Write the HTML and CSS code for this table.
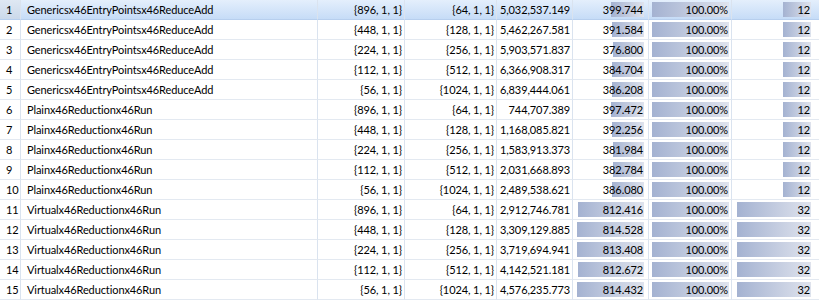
FILE: index.html
```html
<!DOCTYPE html>
<html>
<head>
<meta charset="utf-8">
<link rel="stylesheet" href="styles.css">
</head>
<body>
<div class="grid">
  <div class="row sel"><div class="c idx">1</div><div class="c name">Genericsx46EntryPointsx46ReduceAdd</div><div class="c r">{896, 1, 1}</div><div class="c r">{64, 1, 1}</div><div class="c r">5,032,537.149</div><div class="c b6"><span class="bar" style="width:33px">399.744</span></div><div class="c b7"><span class="bar" style="width:77px">100.00%</span></div><div class="c b8"><span class="bar" style="width:28px">12</span></div></div>
  <div class="row"><div class="c idx">2</div><div class="c name">Genericsx46EntryPointsx46ReduceAdd</div><div class="c r">{448, 1, 1}</div><div class="c r">{128, 1, 1}</div><div class="c r">5,462,267.581</div><div class="c b6"><span class="bar" style="width:32px">391.584</span></div><div class="c b7"><span class="bar" style="width:77px">100.00%</span></div><div class="c b8"><span class="bar" style="width:28px">12</span></div></div>
  <div class="row"><div class="c idx">3</div><div class="c name">Genericsx46EntryPointsx46ReduceAdd</div><div class="c r">{224, 1, 1}</div><div class="c r">{256, 1, 1}</div><div class="c r">5,903,571.837</div><div class="c b6"><span class="bar" style="width:31px">376.800</span></div><div class="c b7"><span class="bar" style="width:77px">100.00%</span></div><div class="c b8"><span class="bar" style="width:28px">12</span></div></div>
  <div class="row"><div class="c idx">4</div><div class="c name">Genericsx46EntryPointsx46ReduceAdd</div><div class="c r">{112, 1, 1}</div><div class="c r">{512, 1, 1}</div><div class="c r">6,366,908.317</div><div class="c b6"><span class="bar" style="width:32px">384.704</span></div><div class="c b7"><span class="bar" style="width:77px">100.00%</span></div><div class="c b8"><span class="bar" style="width:28px">12</span></div></div>
  <div class="row"><div class="c idx">5</div><div class="c name">Genericsx46EntryPointsx46ReduceAdd</div><div class="c r">{56, 1, 1}</div><div class="c r">{1024, 1, 1}</div><div class="c r">6,839,444.061</div><div class="c b6"><span class="bar" style="width:32px">386.208</span></div><div class="c b7"><span class="bar" style="width:77px">100.00%</span></div><div class="c b8"><span class="bar" style="width:28px">12</span></div></div>
  <div class="row"><div class="c idx">6</div><div class="c name">Plainx46Reductionx46Run</div><div class="c r">{896, 1, 1}</div><div class="c r">{64, 1, 1}</div><div class="c r">744,707.389</div><div class="c b6"><span class="bar" style="width:33px">397.472</span></div><div class="c b7"><span class="bar" style="width:77px">100.00%</span></div><div class="c b8"><span class="bar" style="width:28px">12</span></div></div>
  <div class="row"><div class="c idx">7</div><div class="c name">Plainx46Reductionx46Run</div><div class="c r">{448, 1, 1}</div><div class="c r">{128, 1, 1}</div><div class="c r">1,168,085.821</div><div class="c b6"><span class="bar" style="width:32px">392.256</span></div><div class="c b7"><span class="bar" style="width:77px">100.00%</span></div><div class="c b8"><span class="bar" style="width:28px">12</span></div></div>
  <div class="row"><div class="c idx">8</div><div class="c name">Plainx46Reductionx46Run</div><div class="c r">{224, 1, 1}</div><div class="c r">{256, 1, 1}</div><div class="c r">1,583,913.373</div><div class="c b6"><span class="bar" style="width:31px">381.984</span></div><div class="c b7"><span class="bar" style="width:77px">100.00%</span></div><div class="c b8"><span class="bar" style="width:28px">12</span></div></div>
  <div class="row"><div class="c idx">9</div><div class="c name">Plainx46Reductionx46Run</div><div class="c r">{112, 1, 1}</div><div class="c r">{512, 1, 1}</div><div class="c r">2,031,668.893</div><div class="c b6"><span class="bar" style="width:31px">382.784</span></div><div class="c b7"><span class="bar" style="width:77px">100.00%</span></div><div class="c b8"><span class="bar" style="width:28px">12</span></div></div>
  <div class="row"><div class="c idx">10</div><div class="c name">Plainx46Reductionx46Run</div><div class="c r">{56, 1, 1}</div><div class="c r">{1024, 1, 1}</div><div class="c r">2,489,538.621</div><div class="c b6"><span class="bar" style="width:32px">386.080</span></div><div class="c b7"><span class="bar" style="width:77px">100.00%</span></div><div class="c b8"><span class="bar" style="width:28px">12</span></div></div>
  <div class="row"><div class="c idx">11</div><div class="c name">Virtualx46Reductionx46Run</div><div class="c r">{896, 1, 1}</div><div class="c r">{64, 1, 1}</div><div class="c r">2,912,746.781</div><div class="c b6"><span class="bar" style="width:66px">812.416</span></div><div class="c b7"><span class="bar" style="width:77px">100.00%</span></div><div class="c b8"><span class="bar" style="width:74px">32</span></div></div>
  <div class="row"><div class="c idx">12</div><div class="c name">Virtualx46Reductionx46Run</div><div class="c r">{448, 1, 1}</div><div class="c r">{128, 1, 1}</div><div class="c r">3,309,129.885</div><div class="c b6"><span class="bar" style="width:67px">814.528</span></div><div class="c b7"><span class="bar" style="width:77px">100.00%</span></div><div class="c b8"><span class="bar" style="width:74px">32</span></div></div>
  <div class="row"><div class="c idx">13</div><div class="c name">Virtualx46Reductionx46Run</div><div class="c r">{224, 1, 1}</div><div class="c r">{256, 1, 1}</div><div class="c r">3,719,694.941</div><div class="c b6"><span class="bar" style="width:67px">813.408</span></div><div class="c b7"><span class="bar" style="width:77px">100.00%</span></div><div class="c b8"><span class="bar" style="width:74px">32</span></div></div>
  <div class="row"><div class="c idx">14</div><div class="c name">Virtualx46Reductionx46Run</div><div class="c r">{112, 1, 1}</div><div class="c r">{512, 1, 1}</div><div class="c r">4,142,521.181</div><div class="c b6"><span class="bar" style="width:66px">812.672</span></div><div class="c b7"><span class="bar" style="width:77px">100.00%</span></div><div class="c b8"><span class="bar" style="width:74px">32</span></div></div>
  <div class="row"><div class="c idx">15</div><div class="c name">Virtualx46Reductionx46Run</div><div class="c r">{56, 1, 1}</div><div class="c r">{1024, 1, 1}</div><div class="c r">4,576,235.773</div><div class="c b6"><span class="bar" style="width:67px">814.432</span></div><div class="c b7"><span class="bar" style="width:77px">100.00%</span></div><div class="c b8"><span class="bar" style="width:74px">32</span></div></div>
</div>
</body>
</html>
```

FILE: styles.css
```css
html, body {
  margin: 0;
  padding: 0;
  background: #ffffff;
}
body {
  width: 819px;
  height: 301px;
  overflow: hidden;
  font-family: "Lato", "Open Sans", sans-serif;
  font-size: 11px;
  letter-spacing: -0.1px;
  color: #000000;
}
.grid {
  display: flex;
  flex-direction: column;
  width: 820px;
}
.row {
  display: grid;
  grid-template-columns: 21px 297px 87px 92px 76px 76px 83px 88px;
  height: 20px;
}
.c {
  box-sizing: border-box;
  height: 20px;
  border-right: 1px solid #dae3ef;
  border-bottom: 1px solid #e3e9f1;
  line-height: 19px;
  white-space: nowrap;
  overflow: hidden;
}
.idx {
  padding-left: 6px;
}
.name {
  padding-left: 6px;
}
.r {
  text-align: right;
  padding-right: 2px;
}
.b6, .b7, .b8 {
  display: flex;
  justify-content: flex-end;
  align-items: center;
}
.b6 { padding-right: 4px; }
.b7 { padding-right: 2px; }
.b8 { padding-right: 9px; border-right: none; }
.bar {
  display: flex;
  justify-content: flex-end;
  box-sizing: border-box;
  height: 15px;
  line-height: 15px;
  padding-right: 1px;
  white-space: nowrap;
  background: linear-gradient(to right, #a4b2d1, #dfe3ed);
}
.sel .c {
  background: linear-gradient(to bottom, #e4effc, #c6dcf7);
  border-bottom-color: #b7cfee;
}
.sel .idx {
  background: linear-gradient(to bottom, #dfe8f3, #cbd9ea);
}
```
